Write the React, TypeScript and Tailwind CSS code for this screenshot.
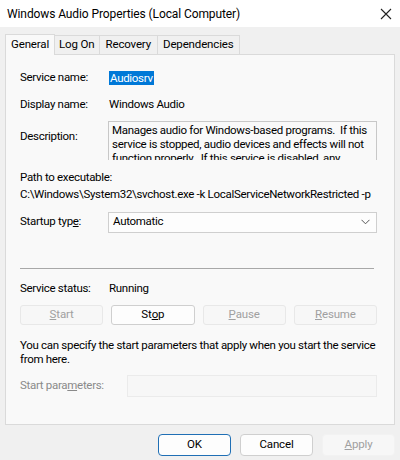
import React from "react";

const font = { fontFamily: 'Roboto, "Liberation Sans", sans-serif' };

function Btn({ children, disabled, primary, className = "" }: { children: React.ReactNode; disabled?: boolean; primary?: boolean; className?: string }) {
  return (
    <div
      className={
        "flex h-[20px] items-center justify-center rounded-[3px] border text-[11.5px] tracking-[-0.15px] " +
        (disabled
          ? "border-[#e8e8e8] bg-[#f7f7f7] text-[#a0a0a0] "
          : primary
          ? "border-[#1f6fb5] bg-[#fdfdfd] text-black "
          : "border-[#cfcfcf] bg-[#fdfdfd] text-black ") +
        className
      }
    >
      {children}
    </div>
  );
}

export default function App() {
  return (
    <div className="h-[460px] w-[400px] overflow-hidden bg-[#f0f0f0] text-black" style={font}>
      {/* Title bar */}
      <div className="flex h-[27px] items-center justify-between bg-white pl-[7px] pr-[7px]">
        <span className="text-[12px] tracking-[-0.1px]">Windows Audio Properties (Local Computer)</span>
        <svg width="12" height="12" viewBox="0 0 12 12" className="mr-[1px]">
          <path d="M1 1 L11 11 M11 1 L1 11" stroke="#222" strokeWidth="1.1" />
        </svg>
      </div>

      {/* Tabs */}
      <div className="flex h-[27px] items-end pl-[5px] pt-[8px] text-[11.5px] tracking-[-0.15px]">
        <div className="relative z-10 -mb-[1px] flex h-[21px] items-start border border-b-0 border-[#dadada] bg-[#f9f9f9] px-[5px] pt-[1px]">
          General
        </div>
        <div className="flex h-[19px] items-center border border-l-0 border-b-0 border-[#dadada] bg-[#f0f0f0] px-[4px]">
          Log On
        </div>
        <div className="flex h-[19px] items-center border border-l-0 border-b-0 border-[#dadada] bg-[#f0f0f0] px-[6px]">
          Recovery
        </div>
        <div className="flex h-[19px] items-center border border-l-0 border-b-0 border-[#dadada] bg-[#f0f0f0] px-[5px]">
          Dependencies
        </div>
      </div>

      {/* Panel */}
      <div className="mx-[5px] h-[371px] border border-[#dadada] bg-[#f9f9f9] pl-[14px] pr-[17px] text-[11.5px] tracking-[-0.3px]">
        <div className="mt-[14px] flex items-center">
          <span className="w-[89px]">Service name:</span>
          <span className="bg-[#0078d7] px-[1px] leading-[14px] text-white">Audiosrv</span>
        </div>
        <div className="mt-[10px] flex items-center">
          <span className="w-[89px]">Display name:</span>
          <span>Windows Audio</span>
        </div>
        <div className="mt-[7px] flex">
          <span className="mt-[7px] w-[88px]">Description:</span>
          <div className="h-[39px] flex-1 overflow-hidden whitespace-nowrap border border-b-0 border-[#c8c8c8] bg-[#f9f9f9] px-[3px] pt-[1px] leading-[14px]">
            Manages audio for Windows-based programs.&nbsp; If this
            <br />
            service is stopped, audio devices and effects will not
            <br />
            function properly.&nbsp; If this service is disabled, any
          </div>
        </div>
        <div className="mt-[9px] leading-[17px]">Path to executable:</div>
        <div className="whitespace-nowrap leading-[17px]">C:\Windows\System32\svchost.exe -k LocalServiceNetworkRestricted -p</div>
        <div className="mt-[9px] flex items-center">
          <span className="w-[88px]">
            Startup typ<span className="underline">e</span>:
          </span>
          <div className="flex h-[21px] flex-1 items-center justify-between border border-[#cfcfcf] bg-[#fdfdfd] pl-[4px] pr-[6px]">
            <span>Automatic</span>
            <svg width="9" height="6" viewBox="0 0 9 6">
              <path d="M0.5 0.8 L4.5 4.8 L8.5 0.8" stroke="#555" strokeWidth="1" fill="none" />
            </svg>
          </div>
        </div>

        <div className="mt-[35px] mr-[3px] h-px bg-[#a8a8a8]" />

        <div className="mt-[11px] flex items-center">
          <span className="w-[89px]">Service status:</span>
          <span>Running</span>
        </div>
        <div className="mt-[8px] grid grid-cols-4 gap-x-[8px]">
          <Btn disabled>
            <span className="underline">S</span>tart
          </Btn>
          <Btn>
            St<span className="underline">o</span>p
          </Btn>
          <Btn disabled>
            <span className="underline">P</span>ause
          </Btn>
          <Btn disabled>
            <span className="underline">R</span>esume
          </Btn>
        </div>
        <div className="mt-[13px] whitespace-nowrap leading-[14px]">
          You can specify the start parameters that apply when you start the service
          <br />
          from here.
        </div>
        <div className="mt-[9px] flex items-center">
          <span className="w-[107px] text-[#8a8a8a]">
            Start para<span className="underline">m</span>eters:
          </span>
          <div className="h-[22px] flex-1 border border-[#ebebeb] bg-[#f7f7f7]" />
        </div>
      </div>

      {/* Footer buttons */}
      <div className="mt-[9px] flex justify-end gap-[9px] pr-[5px]">
        <Btn primary className="h-[22px] w-[73px] rounded-[4px]">OK</Btn>
        <Btn className="h-[22px] w-[73px] rounded-[4px]">Cancel</Btn>
        <Btn disabled className="h-[22px] w-[73px] rounded-[4px] border-[#f2f2f2]">
          <span className="underline">A</span>pply
        </Btn>
      </div>
    </div>
  );
}
